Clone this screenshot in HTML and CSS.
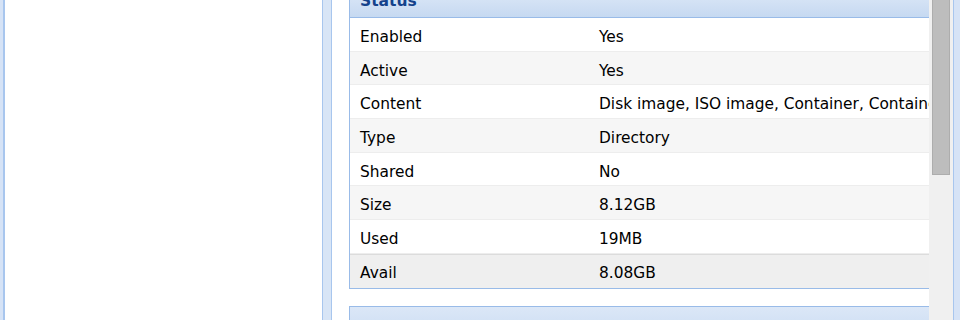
FILE: index.html
```html
<!DOCTYPE html>
<html>
<head>
<meta charset="utf-8">
<link rel="stylesheet" href="styles.css">
</head>
<body>
<div class="edge-l"></div>
<div class="west"></div>
<div class="splitter"></div>
<div class="center">
  <div class="scroll-area">
    <div class="panel">
      <div class="panel-header">Status</div>
      <div class="grid">
        <div class="row"><div class="cell key">Enabled</div><div class="cell val">Yes</div></div>
        <div class="row alt"><div class="cell key">Active</div><div class="cell val">Yes</div></div>
        <div class="row"><div class="cell key">Content</div><div class="cell val">Disk image, ISO image, Container, Container template</div></div>
        <div class="row alt"><div class="cell key">Type</div><div class="cell val">Directory</div></div>
        <div class="row"><div class="cell key">Shared</div><div class="cell val">No</div></div>
        <div class="row alt"><div class="cell key">Size</div><div class="cell val">8.12GB</div></div>
        <div class="row"><div class="cell key">Used</div><div class="cell val">19MB</div></div>
        <div class="row over"><div class="cell key">Avail</div><div class="cell val">8.08GB</div></div>
      </div>
    </div>
    <div class="panel next">
      <div class="panel-header"></div>
    </div>
  </div>
  <div class="scrollbar"><div class="thumb"></div></div>
</div>
<div class="edge-r"></div>
</body>
</html>
```
FILE: styles.css
```css
html, body {
  margin: 0;
  padding: 0;
}
body {
  width: 960px;
  height: 320px;
  overflow: hidden;
  display: flex;
  background: #ffffff;
  font-family: "DejaVu Sans", Verdana, sans-serif;
  font-size: 15.4px;
  color: #000000;
}
.edge-l {
  width: 3px;
  flex: none;
  background: #d6e3f6;
}
.west {
  width: 317px;
  flex: none;
  background: #ffffff;
  border-left: 2px solid #a8c6ee;
  border-right: 1px solid #a8c6ee;
}
.splitter {
  width: 8px;
  flex: none;
  background: #d8e5f6;
}
.center {
  flex: 1;
  display: flex;
  background: #ffffff;
  border-left: 1px solid #a8c6ee;
  border-right: 1px solid #a8c6ee;
  min-width: 0;
}
.edge-r {
  width: 6px;
  flex: none;
  background: #d6e3f6;
}
.scroll-area {
  flex: 1;
  min-width: 0;
  overflow: hidden;
  padding-left: 17px;
}
.panel {
  margin-top: -8px;
  border-left: 1px solid #99bbe8;
  border-bottom: 1px solid #99bbe8;
  width: 700px;
}
.panel.next {
  margin-top: 17.4px;
  border-top: 1px solid #99bbe8;
  border-bottom: none;
}
.panel-header {
  height: 25px;
  border-bottom: 1px solid #99bbe8;
  background: linear-gradient(to bottom, #dbe7f7, #c6d9f1);
  color: #15428b;
  font-weight: bold;
  font-size: 15.5px;
  line-height: 18px;
  padding-left: 10px;
}
.panel.next .panel-header {
  height: 40px;
  border-bottom: none;
}
.row {
  display: flex;
  height: 33.7px;
  box-sizing: border-box;
  border-bottom: 1px solid #ededed;
  background: #ffffff;
  overflow: hidden;
}
.row.alt {
  background: #f6f6f6;
}
.row.over {
  background: #efefef;
  border-top: 1px solid #dcdcdc;
  border-bottom: none;
}
.cell {
  padding-top: 6px;
  line-height: 27px;
  white-space: nowrap;
  overflow: hidden;
  padding-left: 10px;
}
.row.over .cell {
  padding-top: 5px;
}
.key {
  width: 229px;
  flex: none;
}
.val {
  flex: 1;
}
.scrollbar {
  width: 24px;
  flex: none;
  background: #f0f0f0;
}
.thumb {
  margin-left: 3px;
  width: 16px;
  height: 174px;
  background: #bdbdbd;
  border: 1px solid #adadad;
  border-top: none;
}
```
